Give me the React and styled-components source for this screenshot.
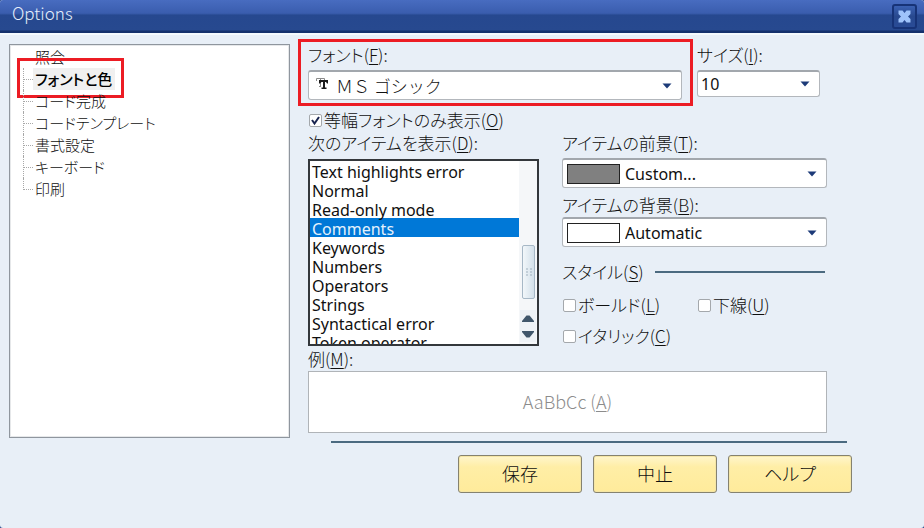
import React, { useState } from "react";
import styled, { createGlobalStyle, css } from "styled-components";

const ui = `"Noto Sans CJK JP", sans-serif`;
const latin = `"Noto Sans", "Noto Sans CJK JP", sans-serif`;

const GlobalStyle = createGlobalStyle`
  *, *::before, *::after { box-sizing: border-box; }
  body {
    margin: 0;
    background: #2a4a8c;
    color: #101010;
    font-family: ${ui};
    font-feature-settings: "palt";
    font-size: 17px;
    font-weight: 300;
    line-height: 22px;
  }
  button, select, input { font: inherit; color: inherit; font-feature-settings: inherit; margin: 0; }
  u { text-underline-offset: 2px; text-decoration-thickness: 1px; }
`;

const Dialog = styled.main`
  min-height: 100vh;
  background: #e8eff7;
  border-radius: 3px;
  overflow: hidden;
`;

const TitleBar = styled.header`
  display: flex;
  align-items: flex-start;
  justify-content: space-between;
  height: 33px;
  padding: 2px 7px 0 12px;
  background: linear-gradient(#486cc0 0%, #3a5dae 40%, #26488f 46%, #27498f 90%, #14306c 95%);
  box-shadow: 0 2px 0 #f4f9fd;
`;

const Title = styled.h1`
  margin: 0;
  color: #e4eefb;
  font-size: 17px;
  font-weight: 300;
  line-height: 22px;
`;

const CloseButton = styled.button`
  display: grid;
  place-items: center;
  width: 25px;
  height: 25px;
  margin-top: 2px;
  padding: 0;
  border: 2px solid #173377;
  border-radius: 3px;
  background: linear-gradient(#3a60b2, #28498f 50%, #294b96);
`;

const Body = styled.div`
  display: grid;
  grid-template-columns: minmax(0, 281fr) minmax(0, 544fr);
  column-gap: 18px;
  padding: 11px 72px 12px 9px;
`;

const Tree = styled.ul`
  list-style: none;
  margin: 0 0 55px;
  padding: 1px 0 0 12px;
  background: #fff;
  border: 1px solid #8f969e;
  box-shadow: inset 0 0 0 1px #e6e8ea;
`;

const TreeRow = styled.li`
  position: relative;
  display: flex;
  align-items: center;
  height: 22px;

  &::before {
    content: "";
    align-self: flex-start;
    width: 10px;
    height: ${(p) => (p.$last ? "12px" : "22px")};
    margin-left: 1px;
    border-left: 1px dotted ${(p) => (p.$first ? "transparent" : "#a8a8a8")};
  }
`;

const Branch = styled.span`
  width: 9px;
  margin-left: -9px;
  border-top: 1px dotted ${(p) => (p.$first ? "transparent" : "#a8a8a8")};
`;

const TreeButton = styled.button`
  padding: 0 3px 0 2px;
  border: 0;
  background: ${(p) => (p.$selected ? "#f0f0f0" : "transparent")};
  font-size: 15px;
  font-weight: ${(p) => (p.$selected ? 500 : 300)};
  line-height: 22px;
  white-space: nowrap;
  color: ${(p) => (p.$selected ? "#000" : "#101010")};
`;

const Highlight = styled.span`
  position: absolute;
  border: 3px solid #ec1c24;
  pointer-events: none;
  ${(p) =>
    p.$wide
      ? css`inset: -5px -11px -6px -10px;`
      : css`left: -5px; top: -10px; width: 107px; height: 40px;`}
`;

const Main = styled.div`
  min-width: 0;
`;

const Form = styled.form`
  padding-right: 25px;
`;

const FontRow = styled.div`
  display: grid;
  grid-template-columns: minmax(0, 1fr) 123px;
  align-items: start;
  column-gap: 15px;
  padding-right: 7px;
`;

const Field = styled.div`
  position: relative;
  display: grid;
  row-gap: ${(p) => p.$gap || "4px"};
`;

const Label = styled.label`
  font-size: 17px;
  line-height: 22px;
  white-space: nowrap;
`;

const Combo = styled.div`
  display: grid;
  align-items: center;
  height: ${(p) => (p.$small ? "27px" : "30px")};
  border: 1px solid #b3b7bc;
  border-top: 2px solid #a2a7ad;
  border-radius: 3px;
  background: #fff;

  > * { grid-area: 1 / 1; }
`;

const Select = styled.select`
  width: 100%;
  height: 100%;
  padding: 0 30px 0 ${(p) => p.$indent || "4px"};
  border: 0;
  appearance: none;
  background: transparent;
  font-family: ${(p) => (p.$japanese ? ui : latin)};
  font-size: ${(p) => (p.$japanese ? "17px" : "16px")};
  font-weight: ${(p) => (p.$japanese ? 300 : 400)};
  font-feature-settings: normal;
`;

const Arrow = styled.svg`
  justify-self: end;
  margin-right: 9px;
  pointer-events: none;
`;

const FontGlyph = styled.svg`
  margin-left: 7px;
  margin-bottom: 4px;
  pointer-events: none;
`;

const Swatch = styled.span`
  width: 53px;
  height: 20px;
  margin-left: 4px;
  border: 1px solid #222;
  background: ${(p) => p.$color};
  pointer-events: none;
`;

const CheckLabel = styled.label`
  display: flex;
  align-items: center;
  height: 22px;
  white-space: nowrap;
`;

const Check = styled.input`
  appearance: none;
  flex: none;
  width: 13px;
  height: 13px;
  margin: 0 2px 0 1px;
  border: 1px solid #a4a8ac;
  border-radius: 2px;
  background: #fff;

  &:checked {
    background: #fff url("data:image/svg+xml,%3Csvg xmlns='http://www.w3.org/2000/svg' viewBox='0 0 11 11'%3E%3Cpath d='M2 5l2.5 3.5L9 2' fill='none' stroke='%23182450' stroke-width='2'/%3E%3C/svg%3E");
  }
`;

const MonoRow = styled.div`
  margin-top: 9px;
`;

const Columns = styled.div`
  display: grid;
  grid-template-columns: minmax(0, 231fr) minmax(0, 265fr);
  column-gap: 23px;
  margin-top: 1px;
`;

const ListFrame = styled.div`
  display: grid;
  grid-template-columns: minmax(0, 1fr) 18px;
  height: 187px;
  border: 2px solid #33373b;
  background: #fff;
`;

const ItemList = styled.select`
  width: 100%;
  height: 183px;
  padding: 0;
  border: 0;
  outline: 0;
  border-radius: 0;
  background: #fff;
  overflow-y: scroll;
  scrollbar-width: none;
  font-family: ${latin};
  font-size: 16px;
  font-weight: 400;
  font-feature-settings: normal;

  option {
    height: 19px;
    min-height: 19px;
    padding: 0 2px 2px;
    line-height: 17px;
    color: #101010;
  }
  option:checked {
    background: #0078d7 linear-gradient(#0078d7, #0078d7);
    color: #fff;
    -webkit-text-fill-color: #e4f1fc;
  }
`;

const ScrollTrack = styled.div`
  display: flex;
  flex-direction: column;
  align-items: center;
  background: #f5f7f9;
`;

const ScrollThumb = styled.div`
  display: grid;
  place-items: center;
  width: 13px;
  height: 54px;
  margin: 84px 0 11px;
  border: 1px solid #a7b8c6;
  border-radius: 2px;
  background: linear-gradient(90deg, #f2f7fa, #d3e0ea);
`;

const ScrollButton = styled.button`
  display: grid;
  place-items: center;
  width: 16px;
  height: 16px;
  padding: 0;
  border: 0;
  background: #eef2f6;
`;

const StyleHead = styled.div`
  display: grid;
  grid-template-columns: 93px 1fr;
  align-items: center;
  margin-top: 14px;
  padding-right: 2px;
`;

const Rule = styled.hr`
  width: 100%;
  height: 2px;
  margin: 0;
  border: 0;
  background: #4b6a80;
`;

const StyleChecks = styled.div`
  display: grid;
  grid-template-columns: 135px 1fr;
  row-gap: 9px;
  margin-top: 11px;
`;

const Gap = styled.div`
  margin-top: ${(p) => p.$size};
`;

const Example = styled.output`
  display: grid;
  place-items: center;
  height: 62px;
  padding-bottom: 2px;
  border: 1px solid #b0b4b8;
  background: #fff;
  color: #8c8c8c;
  font-size: 18px;
`;

const FooterRule = styled.div`
  margin-top: 8px;
  padding: 0 5px 0 23px;
`;

const Footer = styled.footer`
  display: flex;
  justify-content: flex-end;
  gap: 11px;
  margin-top: 12px;
`;

const ActionButton = styled.button`
  width: 124px;
  height: 38px;
  padding: 0 0 2px;
  border: 1px solid #85826f;
  border-radius: 3px;
  background: linear-gradient(#fff6cd, #ffeea6 30%, #ffeb9b);
  box-shadow: inset 0 0 0 1px #f5e6a5;
  font-size: 18px;
  line-height: 24px;
`;

const DropArrow = () => (
  <Arrow width="10" height="6" viewBox="0 0 10 6" aria-hidden="true">
    <path d="M0.5 0.5h9L5 5.5z" fill="#1c3a78" />
  </Arrow>
);

const pages = ["照会", "フォントと色", "コード完成", "コードテンプレート", "書式設定", "キーボード", "印刷"];
const items = [
  "Text highlights error", "Normal", "Read-only mode", "Comments", "Keywords",
  "Numbers", "Operators", "Strings", "Syntactical error", "Token operator",
];

export default function App() {
  const [page, setPage] = useState("フォントと色");
  const [item, setItem] = useState("Comments");

  return (
    <Dialog>
      <GlobalStyle />
      <TitleBar>
        <Title>Options</Title>
        <CloseButton type="button" aria-label="Close">
          <svg width="13" height="13" viewBox="0 0 13 13" aria-hidden="true">
            <path d="M0.500 0.500h4l2 2.500 2-2.500h4v3.500L10 6.500l2.500 2.500v3.500h-4l-2-2.500-2 2.500h-4V9L3 6.500 0.500 4z" fill="#9fc3fb" />
          </svg>
        </CloseButton>
      </TitleBar>
      <Body>
        <Tree>
          {pages.map((name, i) => (
            <TreeRow key={name} $first={i === 0} $last={i === pages.length - 1}>
              <Branch $first={i === 0} />
              <TreeButton type="button" $selected={name === page} onClick={() => setPage(name)}>
                {name}
              </TreeButton>
              {i === 1 && <Highlight />}
            </TreeRow>
          ))}
        </Tree>
        <Main>
          <Form>
            <FontRow>
              <Field>
                <Label htmlFor="font">フォント(<u>F</u>):</Label>
                <Combo>
                  <Select id="font" $indent="27px" $japanese>
                    <option>ＭＳ ゴシック</option>
                  </Select>
                  <FontGlyph width="13" height="13" viewBox="0 0 13 13" aria-hidden="true">
                    <path d="M0.500 4V1.500h8V3M4.500 2v7M3 9.500h2" fill="none" stroke="#8a8a8a" />
                    <path d="M3 3h9v3.500h-1L10 5H9v5.500h1.500V12h-5v-1.500H7V5H5.500L4 6.500H3z" fill="#1a1a1a" />
                  </FontGlyph>
                  <DropArrow />
                </Combo>
                <Highlight $wide />
              </Field>
              <Field>
                <Label htmlFor="size">サイズ(<u>I</u>):</Label>
                <Combo $small>
                  <Select id="size" $indent="3px"><option>10</option></Select>
                  <DropArrow />
                </Combo>
              </Field>
            </FontRow>
            <MonoRow>
              <CheckLabel>
                <Check type="checkbox" defaultChecked />
                <span>等幅フォントのみ表示(<u>O</u>)</span>
              </CheckLabel>
            </MonoRow>
            <Columns>
              <Field>
                <Label htmlFor="items">次のアイテムを表示(<u>D</u>):</Label>
                <ListFrame>
                  <ItemList id="items" size={10} value={item} onChange={(e) => setItem(e.target.value)}>
                    {items.map((name) => <option key={name}>{name}</option>)}
                  </ItemList>
                  <ScrollTrack>
                    <ScrollThumb>
                      <svg width="7" height="9" viewBox="0 0 7 9" aria-hidden="true">
                        <path d="M1 1h2M5 1h2M1 4h2M5 4h2M1 7h2M5 7h2" stroke="#9fb0bd" />
                      </svg>
                    </ScrollThumb>
                    <ScrollButton type="button" aria-label="Scroll up">
                      <svg width="14" height="7" viewBox="0 0 14 7" aria-hidden="true"><path d="M1 7V6l4.500-5.500h3L13 6v1z" fill="#40566a" /></svg>
                    </ScrollButton>
                    <ScrollButton type="button" aria-label="Scroll down">
                      <svg width="14" height="7" viewBox="0 0 14 7" aria-hidden="true"><path d="M1 0h12v1L8.500 6.500h-3L1 1z" fill="#40566a" /></svg>
                    </ScrollButton>
                  </ScrollTrack>
                </ListFrame>
              </Field>
              <div>
                <Field>
                  <Label htmlFor="foreground">アイテムの前景(<u>T</u>):</Label>
                  <Combo>
                    <Select id="foreground" $indent="62px"><option>Custom...</option></Select>
                    <Swatch $color="#808080" />
                    <DropArrow />
                  </Combo>
                </Field>
                <Gap $size="6px">
                  <Field $gap="1px">
                    <Label htmlFor="background">アイテムの背景(<u>B</u>):</Label>
                    <Combo>
                      <Select id="background" $indent="62px"><option>Automatic</option></Select>
                      <Swatch $color="#fff" />
                      <DropArrow />
                    </Combo>
                  </Field>
                </Gap>
                <div role="group" aria-labelledby="style-title">
                  <StyleHead>
                    <span id="style-title">スタイル(<u>S</u>)</span>
                    <Rule />
                  </StyleHead>
                  <StyleChecks>
                    <CheckLabel><Check type="checkbox" /><span>ボールド(<u>L</u>)</span></CheckLabel>
                    <CheckLabel><Check type="checkbox" /><span>下線(<u>U</u>)</span></CheckLabel>
                    <CheckLabel><Check type="checkbox" /><span>イタリック(<u>C</u>)</span></CheckLabel>
                  </StyleChecks>
                </div>
              </div>
            </Columns>
            <Gap $size="1px">
              <Field $gap="1px">
                <Label htmlFor="example">例(<u>M</u>):</Label>
                <Example id="example"><span>AaBbCc (<u>A</u>)</span></Example>
              </Field>
            </Gap>
          </Form>
          <FooterRule><Rule /></FooterRule>
          <Footer>
            <ActionButton type="button">保存</ActionButton>
            <ActionButton type="button">中止</ActionButton>
            <ActionButton type="button">ヘルプ</ActionButton>
          </Footer>
        </Main>
      </Body>
    </Dialog>
  );
}
